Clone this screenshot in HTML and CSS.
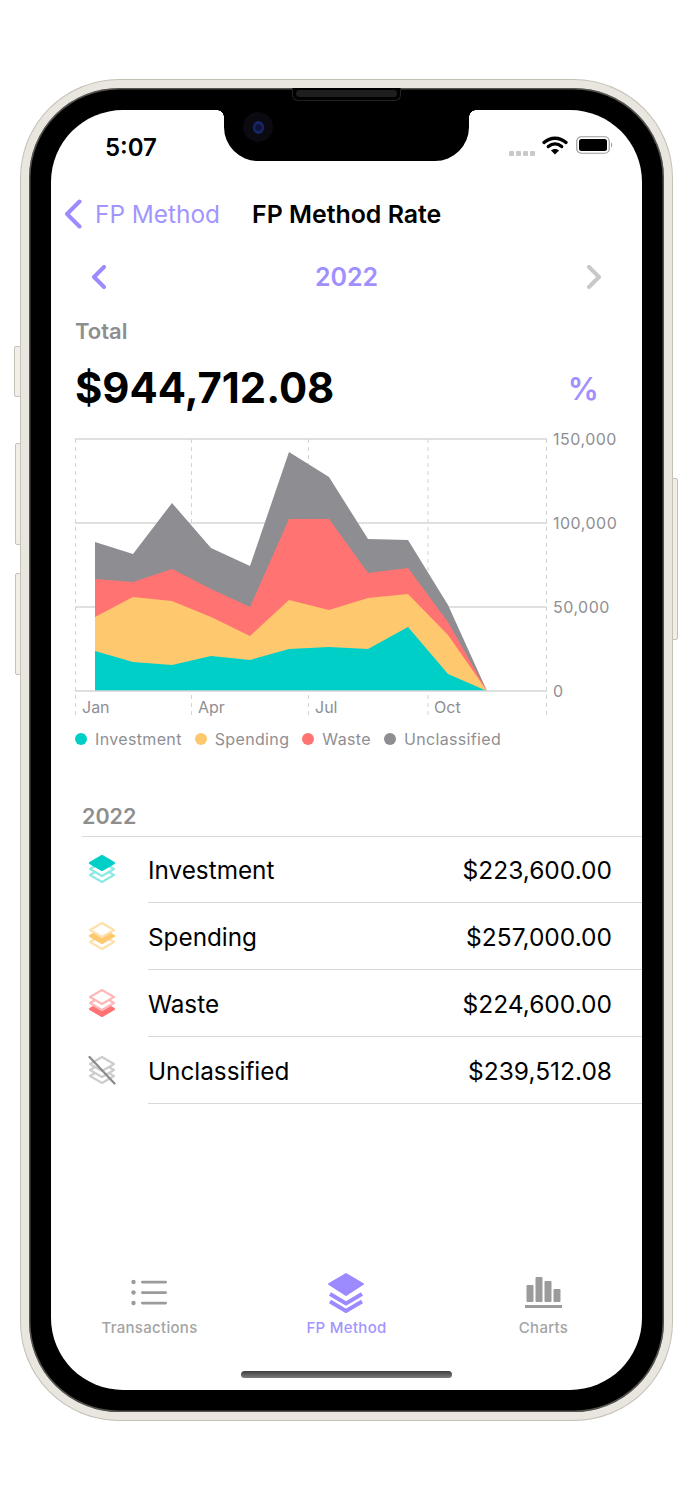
FILE: index.html
```html
<!DOCTYPE html>
<html lang="en">
<head>
<meta charset="utf-8">
<title>FP Method Rate</title>
<link rel="stylesheet" href="styles.css">
</head>
<body>
<svg width="0" height="0" class="defs">
  <defs>
    <path id="dia" d="M14 1 L26 8 L14 15 L2 8 Z"/>
  </defs>
</svg>
<div class="device">
  <span class="btn btn-mute"></span>
  <span class="btn btn-up"></span>
  <span class="btn btn-down"></span>
  <span class="btn btn-power"></span>
  <div class="speaker"></div>
  <div class="notch"><span class="camera"><span class="lens"></span></span></div>
  <main class="screen">
    <header class="status">
      <span class="time">5:07</span>
      <div class="status-icons">
        <span class="signal"><i></i><i></i><i></i><i></i></span>
        <svg class="wifi" width="26" height="19" viewBox="0 0 26 19"><path class="wifi-arc" d="M2 6.5 C8.5 .8 17.5 .8 24 6.5"/><path class="wifi-arc" d="M6.3 10.6 C10.4 7 15.6 7 19.7 10.6"/><path class="wifi-dot" d="M13 18.5 L9 14.4 C11.4 12.4 14.6 12.4 17 14.4 Z"/></svg>
        <svg class="battery" width="38" height="18" viewBox="0 0 38 18"><rect class="bat-shell" x=".75" y=".75" width="32.5" height="16.5" rx="4.5"/><rect class="bat-fill" x="3" y="3" width="28" height="12" rx="2.5"/><path class="bat-tip" d="M35 6.5 C36.5 7 36.5 11 35 11.5 Z"/></svg>
      </div>
    </header>

    <nav class="nav">
      <svg class="back-chev" width="20" height="30" viewBox="0 0 20 30"><path d="M16.5 2.5 L4 15 L16.5 27.5"/></svg>
      <span class="back-label">FP Method</span>
      <h1 class="nav-title">FP Method Rate</h1>
    </nav>

    <div class="year-row">
      <svg class="chev chev-on" width="16" height="24" viewBox="0 0 16 24"><path d="M13 2 L3 12 L13 22"/></svg>
      <span class="year">2022</span>
      <svg class="chev chev-off" width="16" height="24" viewBox="0 0 16 24"><path d="M3 2 L13 12 L3 22"/></svg>
    </div>

    <div class="summary">
      <div class="total-label">Total</div>
      <div class="total-row">
        <span class="total-value">$944,712.08</span>
        <span class="percent">%</span>
      </div>
    </div>

    <svg class="chart" width="591" height="294" viewBox="51 430 591 294">
      <g class="grid">
        <line x1="75" x2="547" y1="439" y2="439"/>
        <line x1="75" x2="547" y1="523" y2="523"/>
        <line x1="75" x2="547" y1="607" y2="607"/>
      </g>
      <g class="vgrid">
        <line x1="75.5" x2="75.5" y1="439" y2="716"/>
        <line x1="191.5" x2="191.5" y1="439" y2="716"/>
        <line x1="308.5" x2="308.5" y1="439" y2="716"/>
        <line x1="428" x2="428" y1="439" y2="716"/>
        <line x1="546.5" x2="546.5" y1="439" y2="716"/>
      </g>
      <polygon class="a-gray" points="95,542 133,554 172,503 211,548 250,566 289,452 329,477 368,539 408,540 448,605 487,691 95,691"/>
      <polygon class="a-red" points="95,579 133,582 172,569 211,589 250,607 289,519 329,519 368,573 408,568 448,622 487,691 95,691"/>
      <polygon class="a-yellow" points="95,617 133,597 172,601 211,617 250,636 289,600 329,610 368,598 408,594 448,635 487,691 95,691"/>
      <polygon class="a-teal" points="95,651 133,662 172,665 211,656 250,660 289,649 329,647 368,649 408,627 448,674 487,691 95,691"/>
      <line class="axis" x1="75" x2="547" y1="691" y2="691"/>
      <g class="labels">
        <text class="y-label" x="553" y="445">150,000</text>
        <text class="y-label" x="553" y="529">100,000</text>
        <text class="y-label" x="553" y="613">50,000</text>
        <text class="y-label" x="553" y="697">0</text>
        <text x="82" y="713">Jan</text>
        <text x="198" y="713">Apr</text>
        <text x="315" y="713">Jul</text>
        <text x="434" y="713">Oct</text>
      </g>
    </svg>

    <ul class="legend">
      <li class="legend-item"><span class="dot dot-teal"></span>Investment</li>
      <li class="legend-item"><span class="dot dot-yellow"></span>Spending</li>
      <li class="legend-item"><span class="dot dot-red"></span>Waste</li>
      <li class="legend-item"><span class="dot dot-gray"></span>Unclassified</li>
    </ul>

    <section class="list">
      <h2 class="list-year">2022</h2>
      <div class="row">
        <svg class="layer teal" width="28" height="30" viewBox="0 0 28 30"><use class="out" href="#dia" y="12"/><use class="out" href="#dia" y="6"/><use class="fill" href="#dia" y="0"/></svg>
        <div class="row-body"><span>Investment</span><span class="amt">$223,600.00</span></div>
      </div>
      <div class="row">
        <svg class="layer yellow" width="28" height="30" viewBox="0 0 28 30"><use class="out" href="#dia" y="12"/><use class="fill" href="#dia" y="6"/><use class="out" href="#dia" y="0"/></svg>
        <div class="row-body"><span>Spending</span><span class="amt">$257,000.00</span></div>
      </div>
      <div class="row">
        <svg class="layer red" width="28" height="30" viewBox="0 0 28 30"><use class="fill" href="#dia" y="12"/><use class="out" href="#dia" y="6"/><use class="out" href="#dia" y="0"/></svg>
        <div class="row-body"><span>Waste</span><span class="amt">$224,600.00</span></div>
      </div>
      <div class="row">
        <svg class="layer gray" width="28" height="30" viewBox="0 0 28 30"><use class="out" href="#dia" y="12"/><use class="out" href="#dia" y="6"/><use class="out" href="#dia" y="0"/><path class="slash" d="M1.5 1 L26.5 27.5"/></svg>
        <div class="row-body"><span>Unclassified</span><span class="amt">$239,512.08</span></div>
      </div>
    </section>

    <footer class="tabbar">
      <div class="tab">
        <svg width="38" height="40" viewBox="0 0 38 40" class="tab-icon tab-list">
          <circle cx="2.5" cy="9" r="2.2"/><circle cx="2.5" cy="19.5" r="2.2"/><circle cx="2.5" cy="30" r="2.2"/>
          <rect x="10" y="7.7" width="26" height="2.8" rx="1.4"/><rect x="10" y="18.2" width="26" height="2.8" rx="1.4"/><rect x="10" y="28.7" width="26" height="2.8" rx="1.4"/>
        </svg>
        <span class="tab-label">Transactions</span>
      </div>
      <div class="tab tab-active">
        <svg width="38" height="40" viewBox="0 0 38 40" class="tab-icon tab-layers">
          <path class="solid" d="M18 1 L35 11 L18 22 L1 11 Z"/>
          <path class="line" d="M2 21 L18 30.5 L34 21"/>
          <path class="line" d="M2 28.5 L18 38 L34 28.5"/>
        </svg>
        <span class="tab-label">FP Method</span>
      </div>
      <div class="tab">
        <svg width="38" height="40" viewBox="0 0 38 40" class="tab-icon tab-bars">
          <rect x="1.5" y="12" width="7" height="17" rx="1"/><rect x="10.5" y="4" width="7" height="25" rx="1"/><rect x="19.5" y="8" width="7" height="21" rx="1"/><rect x="28.5" y="16" width="7" height="13" rx="1"/><rect x="0" y="32" width="37" height="3"/>
        </svg>
        <span class="tab-label">Charts</span>
      </div>
    </footer>
    <div class="home-indicator"></div>
  </main>
</div>
</body>
</html>
```
FILE: styles.css
```css
* { box-sizing: border-box; }
html, body { margin: 0; padding: 0; background: #fff; }
body { width: 693px; height: 1500px; overflow: hidden; font-family: Inter, "Liberation Sans", sans-serif; color: #000; padding-top: 80px; padding-left: 21px; }
.defs { position: absolute; }

.device {
  position: relative;
  width: 651px;
  height: 1340px;
  border-radius: 98px;
  background: #000;
  border: 8px solid #e9e6df;
  box-shadow: 0 0 0 1px #c4c0b6, inset 0 0 0 1.5px #55534e;
  padding: 22px;
}
.btn { position: absolute; background: #f0eee7; border: 1px solid #c6c2b8; }
.btn-mute { left: -15px; top: 258px; width: 7px; height: 51px; border-radius: 2px 0 0 2px; }
.btn-up { left: -14px; top: 355px; width: 6px; height: 102px; border-radius: 2px 0 0 2px; }
.btn-down { left: -14px; top: 485px; width: 6px; height: 102px; border-radius: 2px 0 0 2px; }
.btn-power { right: -14px; top: 390px; width: 6px; height: 162px; border-radius: 0 2px 2px 0; }

.speaker { position: absolute; left: 263px; top: 0; width: 109px; height: 13px; border: 1px solid #222; border-top: 0; border-radius: 0 0 6px 6px; background: #000; z-index: 3; }
.speaker::after { content: ""; display: block; margin: 2px 3px; height: 7px; border-radius: 4px; background: #1e1e1e; }

.notch { position: absolute; left: 195px; top: 22px; width: 245px; height: 51px; background: #000; border-radius: 0 0 34px 34px; z-index: 2; }
.notch::before, .notch::after { content: ""; position: absolute; top: 0; width: 7px; height: 7px; }
.notch::before { left: -7px; background: radial-gradient(circle at 0 100%, transparent 6.5px, #000 7px); }
.notch::after { right: -7px; background: radial-gradient(circle at 100% 100%, transparent 6.5px, #000 7px); }
.camera { position: absolute; left: 19px; top: 2px; width: 30px; height: 30px; border-radius: 50%; background: #0a0a10; display: flex; align-items: center; justify-content: center; }
.lens { width: 11px; height: 13px; border-radius: 50%; background: radial-gradient(circle, #0e1238 25%, #1b2a74 60%, #0a0e2c 100%); }

.screen { position: relative; width: 591px; height: 1280px; background: #fff; border-radius: 72px; overflow: hidden; display: flex; flex-direction: column; }

.status { height: 75px; display: flex; justify-content: space-between; padding: 26px 28px 0 54px; }
.time { font-size: 24px; line-height: 24px; font-weight: 600; }
.status-icons { display: flex; align-items: flex-start; }
.signal { display: flex; gap: 2px; margin-top: 15px; margin-right: 7px; }
.signal i { width: 5px; height: 5px; border-radius: 1px; background: #c9c9c9; }
.wifi { margin-top: 0; margin-right: 8px; }
.wifi-arc { fill: none; stroke: #000; stroke-width: 3.3; stroke-linecap: round; }
.wifi-dot { fill: #000; }
.battery { margin-top: 0; }
.bat-shell { fill: none; stroke: #9a9a9a; stroke-width: 1.2; }
.bat-fill { fill: #000; }
.bat-tip { fill: #9a9a9a; }

.nav { height: 58px; display: flex; align-items: center; padding-left: 12px; position: relative; }
.back-chev { fill: none; stroke: #9c8aff; stroke-width: 4; stroke-linecap: round; stroke-linejoin: round; margin-right: 12px; }
.back-label { font-size: 24.4px; color: #a395fe; width: 157px; white-space: nowrap; }
.nav-title { margin: 0; font-size: 24.9px; font-weight: 600; white-space: nowrap; }

.year-row { height: 67px; display: flex; align-items: center; justify-content: space-between; padding: 0 40px 0 40px; }
.chev { fill: none; stroke-width: 4; stroke-linecap: round; stroke-linejoin: round; }
.chev-on { stroke: #9c8aff; }
.chev-off { stroke: #c8c8c8; }
.year { font-size: 25px; font-weight: 600; color: #a08ffe; }

.summary { padding: 6px 43px 0 24px; }
.total-label { font-size: 22px; line-height: 30px; font-weight: 600; color: #8e8e8e; }
.total-row { display: flex; justify-content: space-between; align-items: center; height: 62px; margin-top: 11px; }
.total-value { font-size: 41.8px; font-weight: 700; }
.percent { font-size: 31px; font-weight: 600; color: #a08ffe; }

.chart { display: block; flex: none; margin-top: 11px; }
.grid line, .axis { stroke: #d6d6d6; stroke-width: 1.3; }
.vgrid line { stroke: #d2d2d2; stroke-width: 1; stroke-dasharray: 4 4; }
.a-gray { fill: #8e8d92; }
.a-red { fill: #ff7473; }
.a-yellow { fill: #fdc86e; }
.a-teal { fill: #00cfc8; }
.labels text { font-size: 16px; fill: #8f8f93; font-family: Inter, "Liberation Sans", sans-serif; }
.labels .y-label { letter-spacing: .5px; }

.legend { list-style: none; margin: 0; padding: 0 0 0 24px; display: flex; gap: 13px; height: 30px; align-items: center; }
.legend-item { display: flex; align-items: center; font-size: 16px; letter-spacing: .35px; color: #8f8f93; white-space: nowrap; }
.dot { width: 12px; height: 12px; border-radius: 50%; margin-right: 8px; }
.dot-teal { background: #00cfc8; }
.dot-yellow { background: #fdc86e; }
.dot-red { background: #ff7473; }
.dot-gray { background: #8e8d92; }

.list { margin-top: 46px; }
.list-year { margin: 0 0 0 31px; font-size: 21.5px; line-height: 33px; font-weight: 600; color: #8e8e8e; height: 36px; }
.row { display: flex; align-items: center; height: 67px; position: relative; }
.list-year + .row::before { content: ""; position: absolute; left: 31px; right: 0; top: 0; height: 1px; background: #d8d8d8; }
.layer { position: absolute; left: 37px; top: 19px; }
.row-body { flex: 1; height: 100%; margin-left: 97px; padding: 1px 30px 0 0; display: flex; align-items: center; justify-content: space-between; border-bottom: 1px solid #d8d8d8; font-size: 24.3px; }
.amt { font-size: 24.5px; }
.out { fill: #fff; stroke-width: 2.2; stroke-linejoin: round; }
.fill { stroke-width: 2.2; stroke-linejoin: round; }
.teal .out { stroke: #8ce9e5; }
.teal .fill { fill: #00cfc8; stroke: #00cfc8; }
.yellow .out { stroke: #fee0ad; }
.yellow .fill { fill: #fdc86e; stroke: #fdc86e; }
.red .out { stroke: #ffb8b8; }
.red .fill { fill: #ff7473; stroke: #ff7473; }
.gray .out { stroke: #cdcdcd; }
.slash { stroke: #8a8a8a; stroke-width: 2.2; stroke-linecap: round; fill: none; }

.tabbar { position: absolute; left: 0; right: 0; top: 1163px; display: flex; }
.tab { width: 197px; display: flex; flex-direction: column; align-items: center; }
.tab-icon { display: block; }
.tab-label { font-size: 15px; line-height: 18px; margin-top: 6px; font-weight: 500; letter-spacing: .3px; color: #a4a4a4; white-space: nowrap; }
.tab-active .tab-label { color: #a395fe; }
.tab-list, .tab-bars { fill: #9b9b9b; }
.solid { fill: #9c8aff; stroke: #9c8aff; stroke-width: 2; stroke-linejoin: round; }
.line { fill: none; stroke: #9c8aff; stroke-width: 4; }

.home-indicator { position: absolute; left: 190px; top: 1261px; width: 211px; height: 7px; border-radius: 4px; background: linear-gradient(#3f3f3f, #7d7d7d); }
```
